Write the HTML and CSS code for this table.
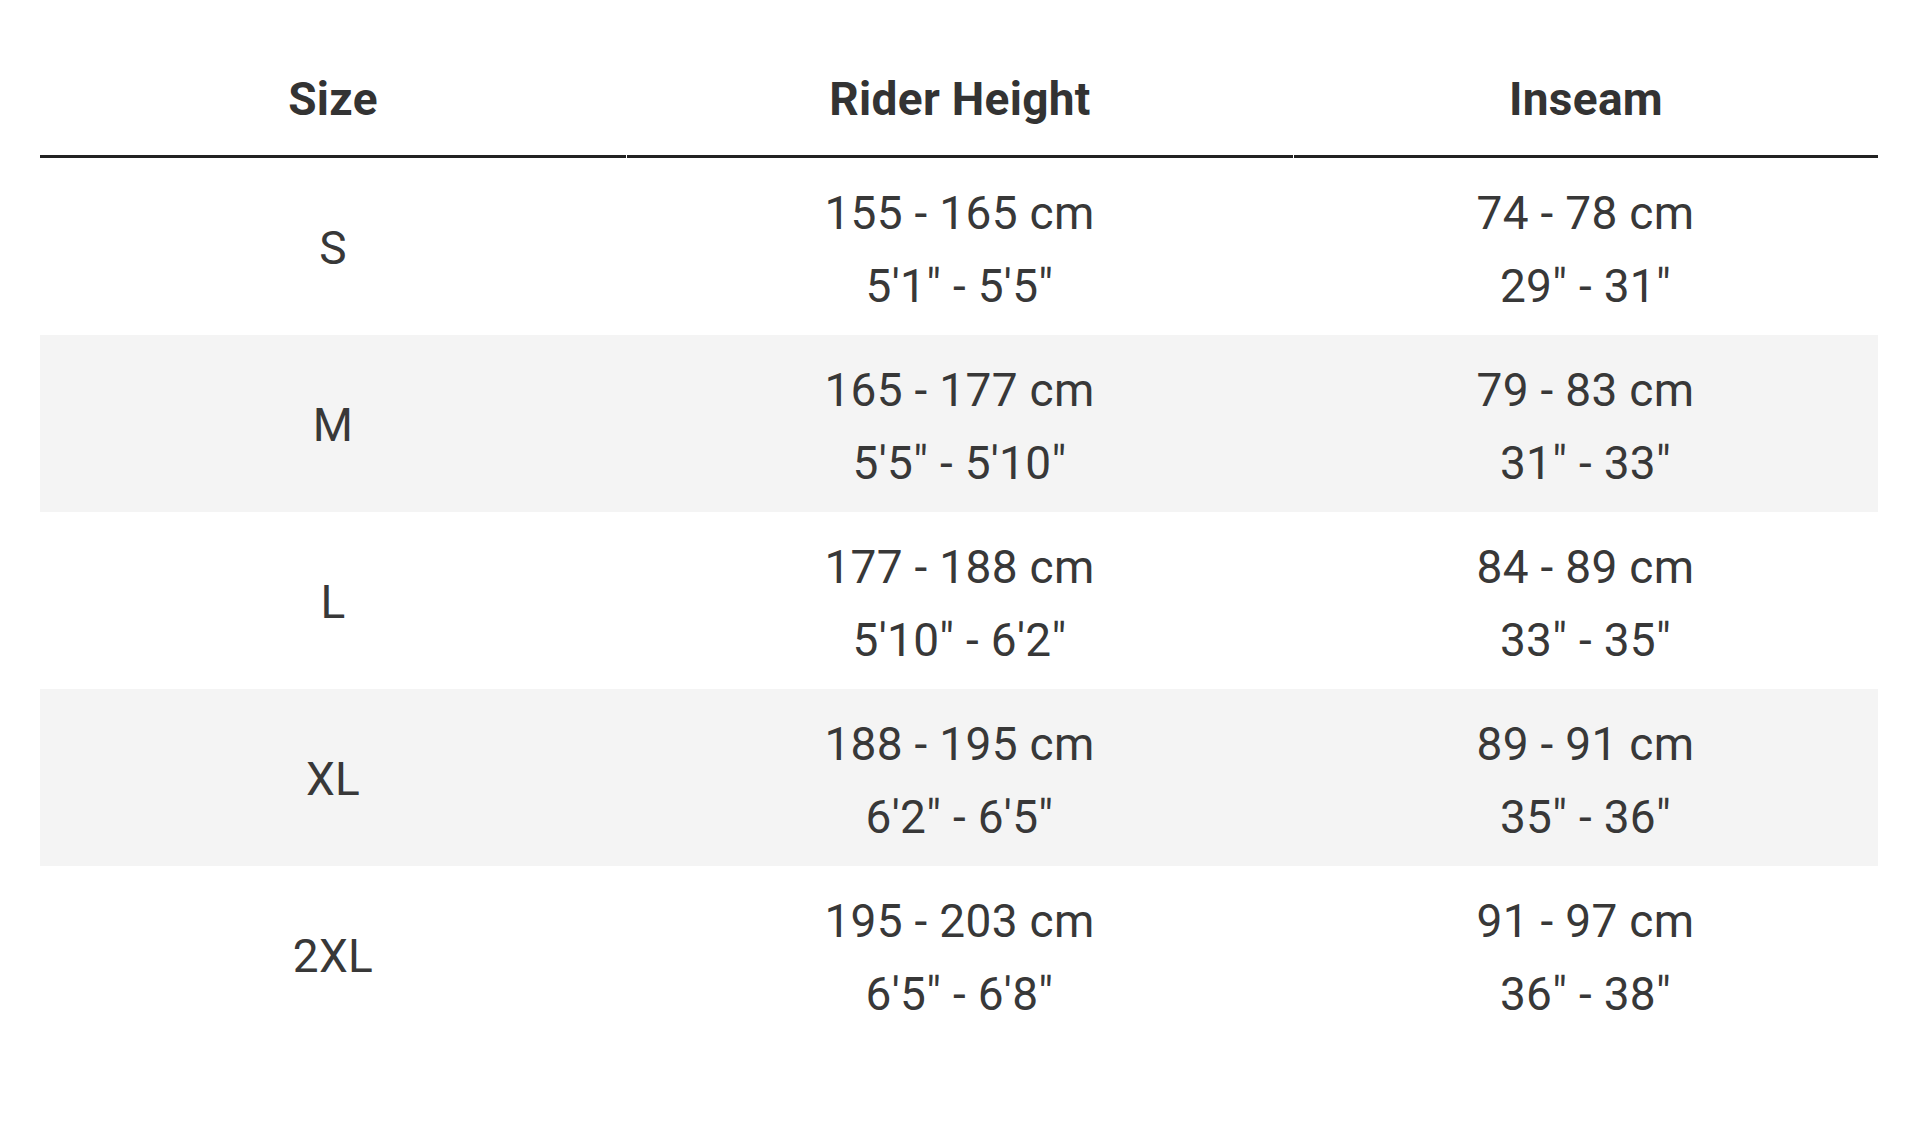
FILE: index.html
```html
<!DOCTYPE html>
<html lang="en">
<head>
<meta charset="utf-8">
<title>Size Chart</title>
<link rel="stylesheet" href="styles.css">
</head>
<body>
<div class="chart">
  <div class="head">
    <div class="th">Size</div>
    <div class="th">Rider Height</div>
    <div class="th">Inseam</div>
  </div>
  <div class="row">
    <div class="td">S</div>
    <div class="td">155 - 165 cm<br>5'1" - 5'5"</div>
    <div class="td">74 - 78 cm<br>29" - 31"</div>
  </div>
  <div class="row alt">
    <div class="td">M</div>
    <div class="td">165 - 177 cm<br>5'5" - 5'10"</div>
    <div class="td">79 - 83 cm<br>31" - 33"</div>
  </div>
  <div class="row">
    <div class="td">L</div>
    <div class="td">177 - 188 cm<br>5'10" - 6'2"</div>
    <div class="td">84 - 89 cm<br>33" - 35"</div>
  </div>
  <div class="row alt">
    <div class="td">XL</div>
    <div class="td">188 - 195 cm<br>6'2" - 6'5"</div>
    <div class="td">89 - 91 cm<br>35" - 36"</div>
  </div>
  <div class="row">
    <div class="td">2XL</div>
    <div class="td">195 - 203 cm<br>6'5" - 6'8"</div>
    <div class="td">91 - 97 cm<br>36" - 38"</div>
  </div>
</div>
</body>
</html>
```

FILE: styles.css
```css
html, body {
  margin: 0;
  padding: 0;
  background: #ffffff;
}

body {
  font-family: Roboto, "Liberation Sans", sans-serif;
  color: #333333;
  font-size: 46px;
  line-height: 1.6;
  letter-spacing: 0.3px;
}

.chart {
  width: 1838px;
  margin: 0 0 0 40px;
  padding-top: 40px;
}

.head {
  display: grid;
  grid-template-columns: 586px 666px 584px;
  column-gap: 1px;
}

.th {
  font-weight: 700;
  text-align: center;
  padding: 23px 0 18px;
  border-bottom: 3px solid #222222;
  color: #333333;
}

.row {
  display: grid;
  grid-template-columns: 586px 667px 585px;
  height: 177px;
  box-sizing: border-box;
}

.row.alt {
  background: #f4f4f4;
}

.td {
  display: flex;
  flex-direction: column;
  justify-content: center;
  text-align: center;
  font-weight: 400;
  color: #383838;
  padding-top: 5px;
}

.td + .td {
  padding-top: 8px;
}
```
